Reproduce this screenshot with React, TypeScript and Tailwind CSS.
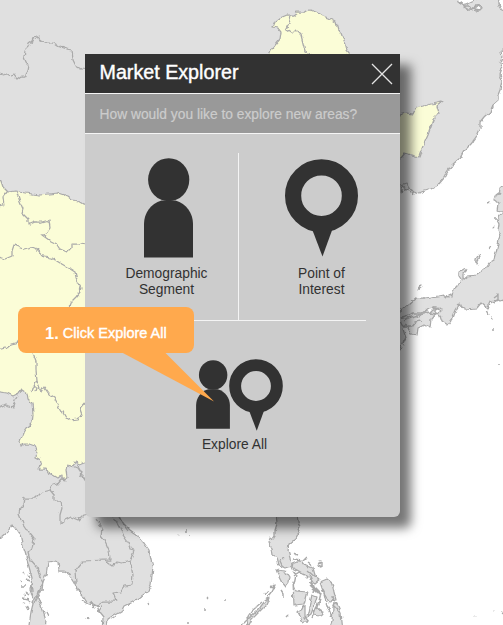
import React from "react";

const LAND = "#e0e0e0";
const ACTIVE = "#fbfdd7";
const EDGE = "#a9a9a9";

const grayLand = [
  // mainland with the Indochina coast
  "M-8 -8H498L499 4L501 8L505 10V48L501 52L502 58L500 63L502 69L500 75L502 81L500 90L498 95L498 101L492 106L490 112L484 117L480 122L480 128L476 137L470 145L464 151L460 158L452 165L447 172L444 178L438 185L431 189L424 191L419 193L413 191L409 188L406 189L403 187L401 192L396 195L380 210V500H100L119 517L124 524L130 530L137 535L144 543L149 550L151 560L153 567L152 576L151 585L147 592L139 598L130 603L124 606L121 612L114 616L108 620L106 632H102L103 617L99 612L102 607L96 606L90 604L86 601L83 596L79 592L75 583L70 575L64 571L59 571L58 562L55 561L48 562L46 575L43 582L42 590L38 598L40 604L43 610L46 620L45 632H28L31 612L34 600L30 590L32 578L28 563L25 552L22 544L20 535L16 529L12 525L8 532L0 539L-8 542Z",
  // western Japan
  "M396 314L403 309L409 304L416 298L424 298L438 296L443 295L447 298L450 295L452 297L453 290L458 285L461 279L459 276L459 272L464 269L467 270L463 274L463 280L468 276L477 275L484 270L489 263L494 260L496 252L498 244L500 235L498 230L499 224L497 220L500 216L503 214H510V298L500 301L497 299L495 303L490 301L487 308L481 303L477 308L465 309L459 305L456 310L453 318L448 325L442 321L440 315L437 312L431 319L430 328L424 325L418 328L417 335L411 334L406 324L403 329L406 338L400 351H396Z",
  "M507 182L500 188L499 193L495 196L494 200L498 203L497 211L501 212L507 210Z",
  "M476 264L480 257L479 254L476 259Z",
  "M417 290L422 286L419 287Z",
  // Luzon
  "M276 510L277 524L275 530L275 536L272 540L270 537L269 542L272 548L273 555L277 557L279 565L285 568L291 566L290 558L288 551L289 544L294 540L297 534L300 528L298 521L296 510Z",
  "M276 570L285 571L289 577L288 582L285 586L281 581L277 573Z",
  // central and southern islands
  "M292 563L297 561L302 561L306 566L313 568L315 575L320 579L315 583L309 579L304 574L297 570L291 567Z",
  "M293 582L296 591L307 592L304 604L294 605Z",
  "M312 595L317 597L315 604L311 614L307 617L309 607Z",
  "M320 582L327 579L332 583L334 592L336 600L329 601L323 591Z",
  "M298 612L305 605L305 617L309 622L303 622Z",
  "M316 609L323 611L320 616L314 615Z",
  "M333 608L337 603L341 612L343 632H328L332 622Z",
  "M248 627L252 619L260 611L266 605L269 598L265 601L258 610L247 620Z",
];

const activeLand = [
  "M-8 170L1 181L3 187L8 192L16 191L25 193L40 195L49 194L58 193L67 196L72 200L79 201L84 204H94V460L85 462L80 464L75 462L72 466L67 465L66 470L67 477L66 480L62 479L62 475L58 478L53 475L48 473L46 469L38 469L41 464L40 459L36 457L37 451L35 446L29 444L24 444L21 447L20 441L23 434L27 428L32 423L33 414L32 403L28 399L27 393L21 389L17 394L13 396L7 393L-8 391Z",
  "M268 58L271 50L276 44L280 39L281 32L278 28L273 27L275 22L280 18L287 15L293 15L297 12L304 12L310 10L316 12L322 16L329 18L336 22L338 29L342 34L345 42L347 50L350 54V60Z",
  "M396 116L407 113L413 114L416 108L424 106L431 104L442 102L437 106L439 113L434 118L431 126L428 135L423 146L420 154L419 157L405 153L401 158L396 158Z",
];

const borders = [
  "M-4 73L3 75L7 74L11 76L14 75L17 79L21 76L25 76L28 71L29 65L26 62L24 57L25 51L28 48L29 44L33 41L35 36L41 40L47 43L54 43L60 47L66 49L72 50L73 60L76 66L81 69L88 70",
  "M7 192L3 197L4 205L-2 206",
  "M17 192L20 202L23 209L22 213L28 219L28 225L35 222L42 222L49 220L50 228L46 234L42 235L49 240L57 244L60 249L67 252L71 248L71 244L79 244L88 245",
  "M-2 257L5 259L12 256L12 251L14 245L24 249L32 247L37 249L44 257L52 258L60 263L67 267L75 272L77 280L81 287L80 292L76 297L71 302L69 307",
  "M-2 349L5 347L8 349L11 344L16 343L19 338",
  "M33 353L36 361L36 370L37 381L34 384L32 391M37 381L41 392L44 387L49 394L54 397L61 410L65 417L70 420L77 419L82 415L80 409L87 401M32 386L37 388L36 391",
  "M-2 409L6 405L13 407L15 400L18 396",
  "M67 479L61 479L57 484L53 485L50 490L42 492L36 498L24 498L23 505L20 508L19 514L23 524L29 533L34 539L32 549L28 553L30 560L37 568L40 577L43 583",
  "M50 490L54 495L54 501L61 501L62 508L60 515L60 524L65 520L71 517L78 520L84 514L90 513",
  "M72 466L77 468L81 474L88 485M76 463L81 472L80 476",
  "M96 519L102 527L101 536L105 541L109 550L110 560L103 560L83 561L78 567L75 571L76 583",
  "M110 512L118 525L123 535L128 542L130 549L134 550L130 561L123 563L117 562L113 566L106 561",
  "M118 512L123 524L128 531",
  "M130 561L133 574L132 585L124 586L120 592L113 593L116 601L104 601L98 605",
  "M34 600L43 583M35 603L41 588",
  "M291 15L290 20L288 26L286 30L292 34L296 30L301 35L303 43L305 51L311 54",
  "M401 186L407 184L411 190L413 194",
  "M247 619L254 609L262 602",
];

// Ragged small coast pieces and reefs
const islets = [
  "M459 4l4-2 1 4 5 0 3 4 4-5 4 0 0 5-5-1-6 1-5-3",
  "M496 198l5-6M494 219l3 0M488 202l2-1M493 227l1 1M489 247l1 2M486 310l2 4M491 317l1 3M488 314l1 2M492 330l2 0M498 364l2 0",
  "M398 318l8-2 7-3 9 0 6-4 7-1 6 1-5 5-7-1-9 2-9 2-8 3M400 322l5 5 7 0 4-5 5-1",
  "M457 305l3-2 2 5M494 297l4-3 0 5-4 2",
  "M23 571l2 3M25 579l4 2M21 586l5 0M26 592l4 3M23 599l5 1M27 605l2 4M31 583l1 8M20 580l1 2M24 594l2 2M22 603l3 1M28 575l2 3M27 599l3 4M46 611l2 4M78 590l5 5M82 600l4 3M91 601l3 7M96 604l3 8M77 586l2 6M87 617l1 2M148 603l1 2",
  "M178 536l1-1M186 530l0 2M191 534l0 1M207 598l1 1M225 600l0 1M205 610l2 0M188 623l2 0",
  "M293 553l5 2M294 559l6 1M303 561l4-4M308 563l4 3M317 565l4 2 0-5-5 2M308 571l7 6M294 576l5-4 5 3M294 571l3 4-2 10M315 587l6 6-2 8M309 582l5 3-1 8M323 589l3 12M320 600l-8 18M326 602l3 9M333 597l2 12M273 585l2 3M282 590l2 3 0 5M288 615l-2 2M309 574l4 12 7 8M310 585l8 8M316 607l7 6M328 607l4 10M336 608l4 5M284 558l-4 3 3 6",
  "M270 586l4 1 1-2-3 6-4 5M268 590l-4 5M241 625l7-7M474 615l1 1M493 610l1 1M501 613l2 1",
];

function MapBackdrop() {
  return (
    <svg
      className="absolute inset-0"
      width="503"
      height="625"
      viewBox="0 0 503 625"
      fill="none"
      stroke={EDGE}
      strokeWidth="1.25"
      strokeLinejoin="round"
      aria-hidden="true"
    >
      <defs>
        {/* roughens coastlines and borders */}
        <filter id="coast" filterUnits="userSpaceOnUse" x="-8" y="-8" width="519" height="641">
          <feTurbulence type="fractalNoise" baseFrequency="0.16" numOctaves="2" seed="4" result="noise" />
          <feDisplacementMap
            in="SourceGraphic"
            in2="noise"
            scale="5"
            xChannelSelector="R"
            yChannelSelector="G"
          />
        </filter>
      </defs>
      <g filter="url(#coast)">
        {grayLand.map((d) => (
          <path key={d} d={d} fill={LAND} />
        ))}
        {activeLand.map((d) => (
          <path key={d} d={d} fill={ACTIVE} />
        ))}
        <path d="M459 2L464 5L472 1L481 -2H458Z M474 9L480 4L481 9L476 11Z" fill="#fff" />
        {borders.map((d) => (
          <path key={d} d={d} />
        ))}
        {islets.map((d) => (
          <path key={d} d={d} strokeWidth="1.4" />
        ))}
        <path d="M423 313l6-4 6-1-5 5zM434 310l6-2 2 2-5 4zM417 315l5-1-4 3z" fill="#fff" />
      </g>
    </svg>
  );
}

function PersonIcon({ className }: { className: string }) {
  return (
    <svg className={className} viewBox="0 0 49 100" fill="#323232" aria-hidden="true">
      <ellipse cx="24.7" cy="21.7" rx="20.6" ry="21.5" />
      <path d="M0 99.5V66C0 55 6.500 46 17.500 42.500H31.500C42.500 46 49 55 49 66V99.500Z" />
    </svg>
  );
}

function PinIcon({ className }: { className: string }) {
  return (
    <svg className={className} viewBox="0 0 73 98" fill="#323232" aria-hidden="true">
      <circle cx="36.5" cy="36.7" r="28.4" fill="none" stroke="#323232" strokeWidth="16.2" />
      <path d="M27 70L37.5 97.5L47.5 70Z" />
    </svg>
  );
}

export default function App() {
  return (
    <div className="relative h-[625px] w-[503px] overflow-hidden bg-white font-['Liberation_Sans',Arial,sans-serif]">
      <MapBackdrop />

      <section className="relative ml-[85px] mt-[54px] flex h-[463px] w-[315px] flex-col rounded-b-[6px] bg-[#cccccc] text-[#323232] shadow-[11px_11px_11px_rgba(0,0,0,0.54)]">
        <header className="flex h-[39px] items-center justify-between bg-[#323232] pl-[14.5px] pr-[7px]">
          <h1 className="-mt-[3px] text-[19.7px] leading-6 text-white [-webkit-text-stroke:0.4px_white]">
            Market Explorer
          </h1>
          <button aria-label="Close" className="mt-px">
            <svg width="22" height="22" viewBox="0 0 22 22" stroke="#e4e4e4" strokeWidth="1.3">
              <path d="M1 1L21 21M21 1L1 21" />
            </svg>
          </button>
        </header>
        <p className="h-[41px] border-y-[1.5px] border-[#f5f5f5] bg-[#999999] pl-[14.5px] text-[13.8px] leading-[41px] text-[#cccccc] [-webkit-text-stroke:0.2px_#cccccc]">
          How would you like to explore new areas?
        </p>

        <div className="mt-[19px] flex h-[167px] text-center text-[13.8px] leading-4">
          <div className="flex w-[153px] flex-col items-center pl-[14px] pt-[5px]">
            <PersonIcon className="h-[100px] w-[49px]" />
            <span className="mt-[8px] pr-[4px]">
              Demographic
              <br />
              Segment
            </span>
          </div>
          <div className="w-px bg-[#f4f4f4]" />
          <div className="flex flex-1 flex-col items-center pl-[4px] pt-[6px]">
            <PinIcon className="h-[98px] w-[73px]" />
            <span className="mt-[9px]">
              Point of
              <br />
              Interest
            </span>
          </div>
        </div>
        <div className="ml-[30px] h-px w-[251px] bg-[#f4f4f4]" />

        <div className="flex flex-col items-center pr-[6px] pt-[38px]">
          <div className="flex items-start">
            <PersonIcon className="mt-px h-[69px] w-[34px]" />
            <PinIcon className="-ml-px h-[72px] w-[54px]" />
          </div>
          <span className="mt-[6px] pr-[10px] text-[13.8px] leading-4">Explore All</span>
        </div>
      </section>

      <div className="absolute left-[18px] top-[307px] flex h-[46px] w-[176px] items-center rounded-[8px] bg-[#ffa94d] pl-[27px] pt-[5px] text-[14.5px] leading-5 text-white">
        <svg
          className="absolute left-[103px] top-[45px]"
          width="94"
          height="50"
          viewBox="0 0 94 50"
          fill="#ffa94d"
          aria-hidden="true"
        >
          <path d="M0 0H43.5L93 49.5Z" />
        </svg>
        <b className="mr-[4px] text-[16.5px]">1.</b>
        <span className="[-webkit-text-stroke:0.4px_white]">Click Explore All</span>
      </div>
    </div>
  );
}
